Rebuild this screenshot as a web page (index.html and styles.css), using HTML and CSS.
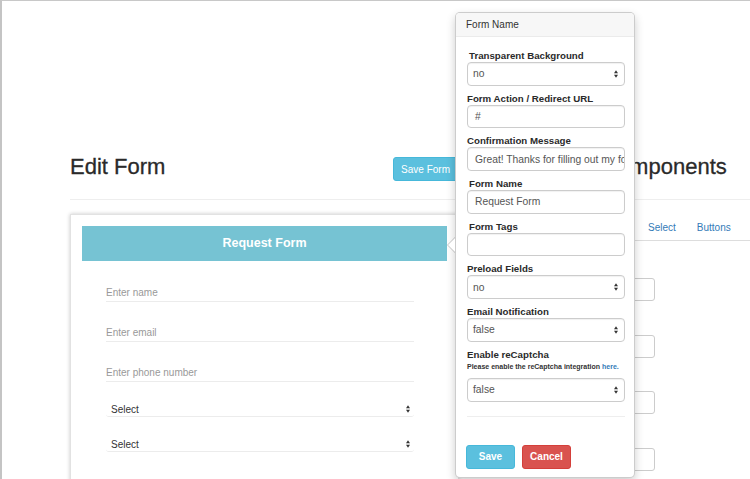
FILE: index.html
```html
<!DOCTYPE html>
<html>
<head>
<meta charset="utf-8">
<title>Edit Form</title>
<link rel="stylesheet" href="styles.css">
</head>
<body>
<div class="frame">
  <div class="content">
    <div class="head-row">
      <div class="left-head">
        <h1 class="title">Edit Form</h1>
        <button class="btn-info save-form">Save Form</button>
      </div>
      <div class="right-head">
        <h1 class="title">Components</h1>
      </div>
    </div>
    <hr class="divider">
    <div class="body-row">
      <div class="card">
        <div class="card-head">Request Form</div>
        <div class="fields">
          <div class="field first">Enter name</div>
          <div class="field">Enter email</div>
          <div class="field">Enter phone number</div>
          <div class="sel"><span>Select</span><svg class="updown" width="4" height="8" viewBox="0 0 4 8"><polygon points="0,3.3 2,0.3 4,3.3" fill="#333"/><polygon points="0,4.7 2,7.7 4,4.7" fill="#333"/></svg></div>
          <div class="sel"><span>Select</span><svg class="updown" width="4" height="8" viewBox="0 0 4 8"><polygon points="0,3.3 2,0.3 4,3.3" fill="#333"/><polygon points="0,4.7 2,7.7 4,4.7" fill="#333"/></svg></div>
        </div>
      </div>
      <div class="components">
        <div class="tabs">
          <a class="tab">Select</a>
          <a class="tab">Buttons</a>
        </div>
        <div class="comp-input first"></div>
        <div class="comp-input"></div>
        <div class="comp-input"></div>
        <div class="comp-input"></div>
      </div>
    </div>
  </div>

  <div class="popover">
    <div class="arrow"></div>
    <div class="pop-head">Form Name</div>
    <div class="pop-body">
      <div class="lbl indent">Transparent Background</div>
      <div class="ctl select"><span>no</span><svg class="updown" width="4" height="8" viewBox="0 0 4 8"><polygon points="0,3.3 2,0.3 4,3.3" fill="#333"/><polygon points="0,4.7 2,7.7 4,4.7" fill="#333"/></svg></div>
      <div class="lbl">Form Action / Redirect URL</div>
      <div class="ctl input">#</div>
      <div class="lbl">Confirmation Message</div>
      <div class="ctl input">Great! Thanks for filling out my form!</div>
      <div class="lbl indent">Form Name</div>
      <div class="ctl input">Request Form</div>
      <div class="lbl indent">Form Tags</div>
      <div class="ctl input"></div>
      <div class="lbl">Preload Fields</div>
      <div class="ctl select"><span>no</span><svg class="updown" width="4" height="8" viewBox="0 0 4 8"><polygon points="0,3.3 2,0.3 4,3.3" fill="#333"/><polygon points="0,4.7 2,7.7 4,4.7" fill="#333"/></svg></div>
      <div class="lbl">Email Notification</div>
      <div class="ctl select"><span>false</span><svg class="updown" width="4" height="8" viewBox="0 0 4 8"><polygon points="0,3.3 2,0.3 4,3.3" fill="#333"/><polygon points="0,4.7 2,7.7 4,4.7" fill="#333"/></svg></div>
      <div class="lbl">Enable reCaptcha</div>
      <div class="help">Please enable the reCaptcha integration <a class="link">here.</a></div>
      <div class="ctl select"><span>false</span><svg class="updown" width="4" height="8" viewBox="0 0 4 8"><polygon points="0,3.3 2,0.3 4,3.3" fill="#333"/><polygon points="0,4.7 2,7.7 4,4.7" fill="#333"/></svg></div>
      <hr class="pop-hr">
      <div class="pop-btns">
        <button class="btn-info pbtn">Save</button>
        <button class="btn-danger pbtn">Cancel</button>
      </div>
    </div>
  </div>
</div>
</body>
</html>
```

FILE: styles.css
```css
html, body {
  margin: 0;
  padding: 0;
  background: #fff;
}
body {
  font-family: "Liberation Sans", Arial, sans-serif;
  color: #333;
}
.frame {
  position: relative;
  width: 750px;
  height: 479px;
  box-sizing: border-box;
  border-top: 1px solid #c8c8c8;
  border-left: 2px solid #c4c4c4;
  overflow: hidden;
}
.content {
  padding: 154px 0 0 68px;
}
.head-row {
  display: flex;
  height: 24px;
}
.left-head {
  width: 388px;
  display: flex;
  justify-content: space-between;
  align-items: flex-start;
}
.title {
  margin: 0;
  font-size: 22px;
  line-height: 24px;
  font-weight: normal;
  color: #2a2a2a;
  -webkit-text-stroke: 0.3px #2a2a2a;
  white-space: nowrap;
}
.right-head {
  margin-left: 144px;
}
button {
  font-family: "Liberation Sans", Arial, sans-serif;
  cursor: pointer;
}
.btn-info {
  background: #5bc0de;
  border: 1px solid #46b8da;
  color: #fff;
}
.btn-danger {
  background: #d9534f;
  border: 1px solid #d43f3a;
  color: #fff;
}
.save-form {
  margin-top: 2px;
  height: 24px;
  padding: 0 7px;
  font-size: 10px;
  border-radius: 3px;
}
.divider {
  margin: 20px 0 0 0;
  border: 0;
  border-top: 1px solid #eee;
  height: 0;
}
.body-row {
  display: flex;
  margin-top: 14px;
}
.card {
  width: 389px;
  height: 300px;
  box-sizing: border-box;
  padding: 11px;
  border: 1px solid #e2e2e2;
  box-shadow: 0 0 4px rgba(0, 0, 0, 0.22);
  flex-shrink: 0;
}
.card-head {
  height: 35px;
  line-height: 35px;
  background: #76c3d3;
  color: #fff;
  font-weight: bold;
  font-size: 12.5px;
  text-align: center;
}
.fields {
  padding: 0 33px 0 24px;
}
.field {
  height: 18px;
  line-height: 19px;
  margin-top: 21px;
  border-bottom: 1px solid #ececec;
  font-size: 10px;
  color: #999;
}
.field.first {
  margin-top: 22px;
}
.sel {
  height: 14px;
  line-height: 15px;
  margin-top: 20px;
  padding: 0 4px 0 5px;
  border-bottom: 1px solid #ececec;
  border-radius: 0 0 3px 3px;
  font-size: 10px;
  color: #333;
  display: flex;
  justify-content: space-between;
  align-items: center;
}
.updown {
  display: block;
}
.components {
  margin-left: 143px;
  flex: 1;
}
.tabs {
  display: flex;
  padding-left: 36px;
  border-bottom: 1px solid #ddd;
}
.tab {
  padding: 6px 10px;
  margin-right: 1px;
  font-size: 10px;
  line-height: 15px;
  height: 14px;
  color: #337ab7;
  white-space: nowrap;
}
.comp-input {
  width: 53px;
  height: 23px;
  box-sizing: border-box;
  border: 1px solid #ccc;
  border-radius: 3px;
  margin-top: 33.7px;
}
.comp-input.first {
  margin-top: 37px;
}

/* popover */
.popover {
  position: absolute;
  left: 453px;
  top: 11px;
  width: 180px;
  box-sizing: border-box;
  background: #fff;
  border: 1px solid rgba(0, 0, 0, 0.2);
  border-radius: 5px;
  box-shadow: 0 4px 10px rgba(0, 0, 0, 0.2);
}
.arrow {
  position: absolute;
  left: -9px;
  top: 224px;
  width: 0;
  height: 0;
  border-top: 8px solid transparent;
  border-bottom: 8px solid transparent;
  border-right: 8px solid rgba(0, 0, 0, 0.22);
}
.arrow::after {
  content: "";
  position: absolute;
  left: 1px;
  top: -7px;
  width: 0;
  height: 0;
  border-top: 7px solid transparent;
  border-bottom: 7px solid transparent;
  border-right: 7px solid #fff;
}
.pop-head {
  height: 23px;
  line-height: 24px;
  padding: 0 10px;
  background: #f7f7f7;
  border-bottom: 1px solid #ebebeb;
  border-radius: 4px 4px 0 0;
  font-size: 10px;
  color: #333;
}
.pop-body {
  padding: 12px 9px 8px 11px;
}
.lbl {
  font-size: 9.7px;
  line-height: 13px;
  height: 12px;
  font-weight: bold;
  color: #2a2a2a;
  margin-bottom: 1px;
  white-space: nowrap;
}
.lbl.indent {
  padding-left: 2px;
}
.ctl {
  height: 23.7px;
  box-sizing: border-box;
  border: 1px solid #ccc;
  border-radius: 4px;
  box-shadow: inset 0 1px 1px rgba(0, 0, 0, 0.06);
  margin-bottom: 6px;
  font-size: 10.3px;
  color: #555;
  white-space: nowrap;
  overflow: hidden;
  display: flex;
  align-items: center;
}
.ctl.input {
  padding: 0 7px;
}
.ctl.select {
  padding: 0 6px 0 5px;
  justify-content: space-between;
}
.help {
  font-size: 7px;
  line-height: 11px;
  height: 10px;
  font-weight: bold;
  color: #333;
  margin-bottom: 7px;
  white-space: nowrap;
}
.link {
  color: #337ab7;
}
.pop-hr {
  margin: 14px 0 0 0;
  border: 0;
  border-top: 1px solid #eee;
  height: 0;
}
.pop-btns {
  display: flex;
  gap: 7px;
  margin-top: 28px;
  margin-left: -1px;
}
.pbtn {
  width: 49px;
  height: 24px;
  padding: 0;
  font-size: 10px;
  font-weight: bold;
  border-radius: 3px;
}
```
